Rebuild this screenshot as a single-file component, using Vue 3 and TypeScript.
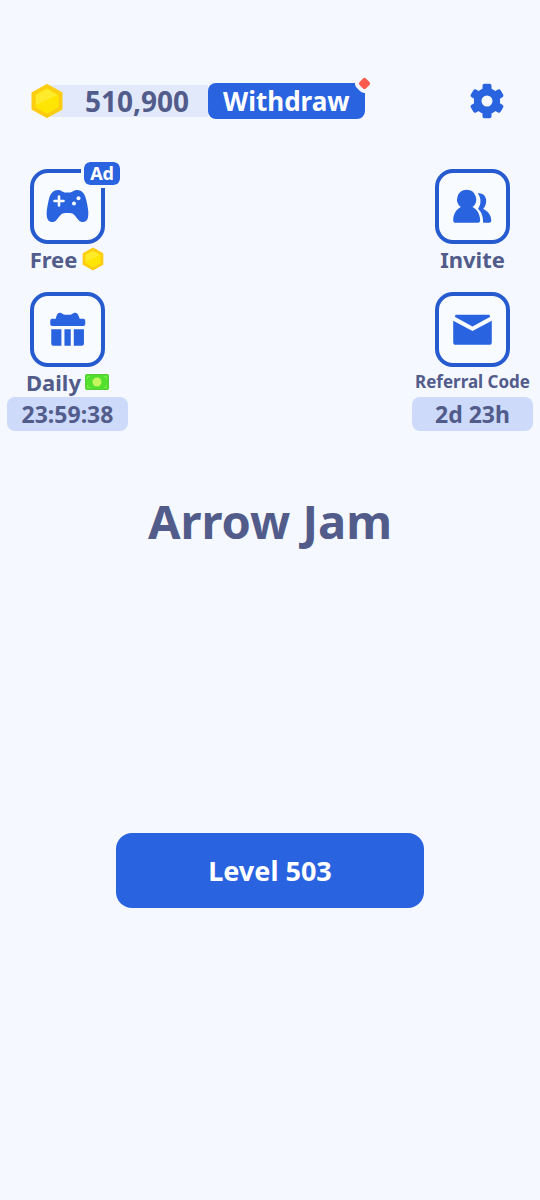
<script setup lang="ts">
import { ref } from 'vue'

const balance = ref(510900)
const level = ref(503)
const dailyTimer = ref('23:59:38')
const referralTimer = ref('2d 23h')
const teeth = [0, 60, 120, 180, 240, 300]
</script>

<template>
  <main class="screen">
    <header class="topbar">
      <div class="balance">
        <svg class="coin" viewBox="0 0 34 36" aria-hidden="true">
          <path d="M17 2.500 31 10.200V25.800L17 33.500 3 25.800V10.200Z" fill="#fccd12" stroke="#fccd12" stroke-width="3" stroke-linejoin="round" />
          <path d="M17 6.500 27.500 12.300V23.700L17 29.500 6.500 23.700V12.300Z" fill="#fee503" stroke="#fee503" stroke-width="2" stroke-linejoin="round" />
          <path d="M6 22V12L17 6 27.500 12Z" fill="#ffea2c" />
        </svg>
        <span class="amount">{{ balance.toLocaleString('en-US') }}</span>
      </div>
      <button class="withdraw" type="button">Withdraw<i class="dot"></i></button>
      <button class="settings" type="button" aria-label="Settings">
        <svg viewBox="0 0 36 36" fill="#2a63df" aria-hidden="true">
          <rect v-for="angle in teeth" :key="angle" x="13.500" y="0.800" width="9" height="10" rx="2" :transform="`rotate(${angle} 18 18)`" />
          <circle cx="18" cy="18" r="9.300" fill="none" stroke="#2a63df" stroke-width="7.600" />
        </svg>
      </button>
    </header>

    <div class="shortcuts">
      <div class="column">
        <button class="shortcut" type="button">
          <span class="tile">
            <svg viewBox="0 0 67 67" aria-hidden="true">
              <path d="M24 17C27.500 17 28.500 19.500 31.500 19.500H35.500C38.500 19.500 39.500 17 43 17C48.500 17 51 21 52.500 28C53.800 34 55 40 54 44.500C53 49.500 47.500 50.500 44.500 47C41.500 43.500 40 40 35.500 40H31.500C27 40 25.500 43.500 22.500 47C19.500 50.500 14 49.500 13 44.500C12 40 13.200 34 14.500 28C16 21 18.500 17 24 17Z" fill="#2a63df" />
              <path d="M25 23.500V32.500M20.500 28H29.500" stroke="#f7faff" stroke-width="2.600" stroke-linecap="round" />
              <circle cx="44.500" cy="25.200" r="2" fill="#f7faff" />
              <circle cx="40" cy="30.500" r="2" fill="#f7faff" />
            </svg>
            <span class="ad">Ad</span>
          </span>
          <span class="label">Free
            <svg class="mini-coin" viewBox="0 0 34 36" aria-hidden="true">
              <path d="M17 2.500 31 10.200V25.800L17 33.500 3 25.800V10.200Z" fill="#fccd12" stroke="#fccd12" stroke-width="3" stroke-linejoin="round" />
              <path d="M17 6.500 27.500 12.300V23.700L17 29.500 6.500 23.700V12.300Z" fill="#fee503" stroke="#fee503" stroke-width="2" stroke-linejoin="round" />
              <path d="M6 22V12L17 6 27.500 12Z" fill="#ffea2c" />
            </svg>
          </span>
        </button>
        <button class="shortcut" type="button">
          <span class="tile">
            <svg viewBox="0 0 66 66" fill="#2a63df" aria-hidden="true">
              <path d="M18 22.500H21.500C22 18.500 23.500 15.800 26 16.500C28 17 29 18.500 30.500 18.500H35.500C37 18.500 38 17 40 16.500C42.500 15.800 44 18.500 45 22.500H48.500Q50.500 22.500 50.500 24.500V27.500Q50.500 29.500 48.500 29.500H18Q16 29.500 16 27.500V24.500Q16 22.500 18 22.500Z" />
              <path d="M17 32.800H27V49H19Q17 49 17 47ZM30 32.800H36.200V49H30ZM39.200 32.800H49.200V47Q49.200 49 47.200 49H39.200Z" />
            </svg>
          </span>
          <span class="label">Daily
            <svg class="cash" viewBox="0 0 24 16" aria-hidden="true">
              <rect x="0.500" y="0.500" width="23" height="15" rx="1" fill="#53df2d" stroke="#55cc35" />
              <path d="M2.500 5V2.500H5M19 2.500H21.500V5M21.500 11V13.500H19M5 13.500H2.500V11" fill="none" stroke="#79ef4b" />
              <circle cx="12" cy="8" r="4.500" fill="#c4f65e" />
            </svg>
          </span>
          <span class="timer">{{ dailyTimer }}</span>
        </button>
      </div>

      <div class="column">
        <button class="shortcut" type="button">
          <span class="tile">
            <svg viewBox="0 0 66 66" fill="#2a63df" aria-hidden="true">
              <path d="M38 20C46 18.500 49.500 28 43.500 35.500C48 37.500 51.500 41.500 51.500 47Q51.500 49 49.500 49H43.500C43.500 42 41.500 38 38.500 35.500C42 30 41.500 24 38 20Z" />
              <path d="M27 16.500A9.500 9.500 0 0 1 33 33.500C37.500 35.500 40.500 41 40.500 46.500Q40.500 49 38.500 49H16Q14 49 14 46.500C14 41 17 35.500 21.500 33.500A9.500 9.500 0 0 1 27 16.500Z" />
            </svg>
          </span>
          <span class="label">Invite</span>
        </button>
        <button class="shortcut" type="button">
          <span class="tile">
            <svg viewBox="0 0 66 66" fill="#2a63df" aria-hidden="true">
              <path d="M16.500 18.500H49.500L50.500 20.500 33 30 15.500 20.500Z" />
              <path d="M14 24.500 33 34.500 52 24.500V45.500Q52 48 49.500 48H16.500Q14 48 14 45.500Z" />
            </svg>
          </span>
          <span class="label small">Referral Code</span>
          <span class="timer">{{ referralTimer }}</span>
        </button>
      </div>
    </div>

    <h1 class="title">Arrow Jam</h1>
    <button class="play" type="button">Level {{ level }}</button>
  </main>
</template>

<style>
body {
  margin: 0;
  background: #f5f8ff;
}
</style>

<style scoped>
.screen {
  display: flex;
  flex-direction: column;
  min-height: 100vh;
  box-sizing: border-box;
  padding-top: 83px;
  background: #f5f8ff;
  color: #525c8b;
  font-family: "Noto Sans", "Open Sans", sans-serif;
  font-weight: 700;
}
button {
  margin: 0;
  padding: 0;
  border: 0;
  background: none;
  color: inherit;
  font: inherit;
  cursor: pointer;
}
svg {
  display: block;
}
.topbar {
  display: flex;
  align-items: center;
  height: 36px;
  padding: 0 35px 0 30px;
}
.balance {
  display: flex;
  align-items: center;
}
.coin {
  position: relative;
  width: 34px;
  height: 36px;
  margin-right: -16px;
}
.amount {
  padding: 0 19px 0 37px;
  background: #e2e9fb;
  font-size: 28px;
  line-height: 32px;
}
.withdraw {
  position: relative;
  height: 36px;
  padding: 0 15px;
  border-radius: 8px;
  background: #2a63df;
  color: #fff;
  font-size: 26px;
  line-height: 36px;
}
.dot {
  position: absolute;
  top: -8px;
  right: -8px;
  width: 9px;
  height: 9px;
  border: 4px solid #f5f8ff;
  border-radius: 6px;
  background: #fb5b4c;
  transform: rotate(45deg);
}
.settings {
  margin-left: auto;
}
.settings svg {
  width: 36px;
  height: 36px;
}
.shortcuts {
  display: flex;
  justify-content: space-between;
  padding: 50px 7px 0;
}
.column {
  display: flex;
  flex-direction: column;
  gap: 18px;
  width: 121px;
}
.shortcut {
  display: flex;
  flex-direction: column;
  align-items: center;
}
.tile {
  position: relative;
  box-sizing: border-box;
  width: 75px;
  height: 75px;
  border: 4px solid #265bcf;
  border-radius: 18px;
  background: #f8fbff;
}
.tile > svg {
  width: 67px;
  height: 67px;
}
.ad {
  position: absolute;
  top: -14px;
  right: -22px;
  padding: 0 6px;
  border: 3px solid #f5f8ff;
  border-radius: 9px;
  background: #2a63df;
  background-clip: padding-box;
  color: #fff;
  font-size: 18px;
  line-height: 23px;
}
.label {
  display: flex;
  align-items: center;
  gap: 4px;
  font-size: 22px;
  line-height: 30px;
  white-space: nowrap;
}
.label.small {
  font-size: 17px;
}
.mini-coin {
  width: 24px;
  height: 24px;
}
.cash {
  width: 24px;
  height: 16px;
}
.timer {
  width: 100%;
  border-radius: 8px;
  background: #cddafa;
  font-size: 23px;
  line-height: 34px;
}
.title {
  margin: 56px 0 0;
  font-size: 47px;
  line-height: 68px;
  text-align: center;
}
.play {
  align-self: center;
  width: 57%;
  height: 75px;
  margin-top: 278px;
  border-radius: 16px;
  background: #2a63df;
  color: #fff;
  font-size: 27px;
}
</style>
